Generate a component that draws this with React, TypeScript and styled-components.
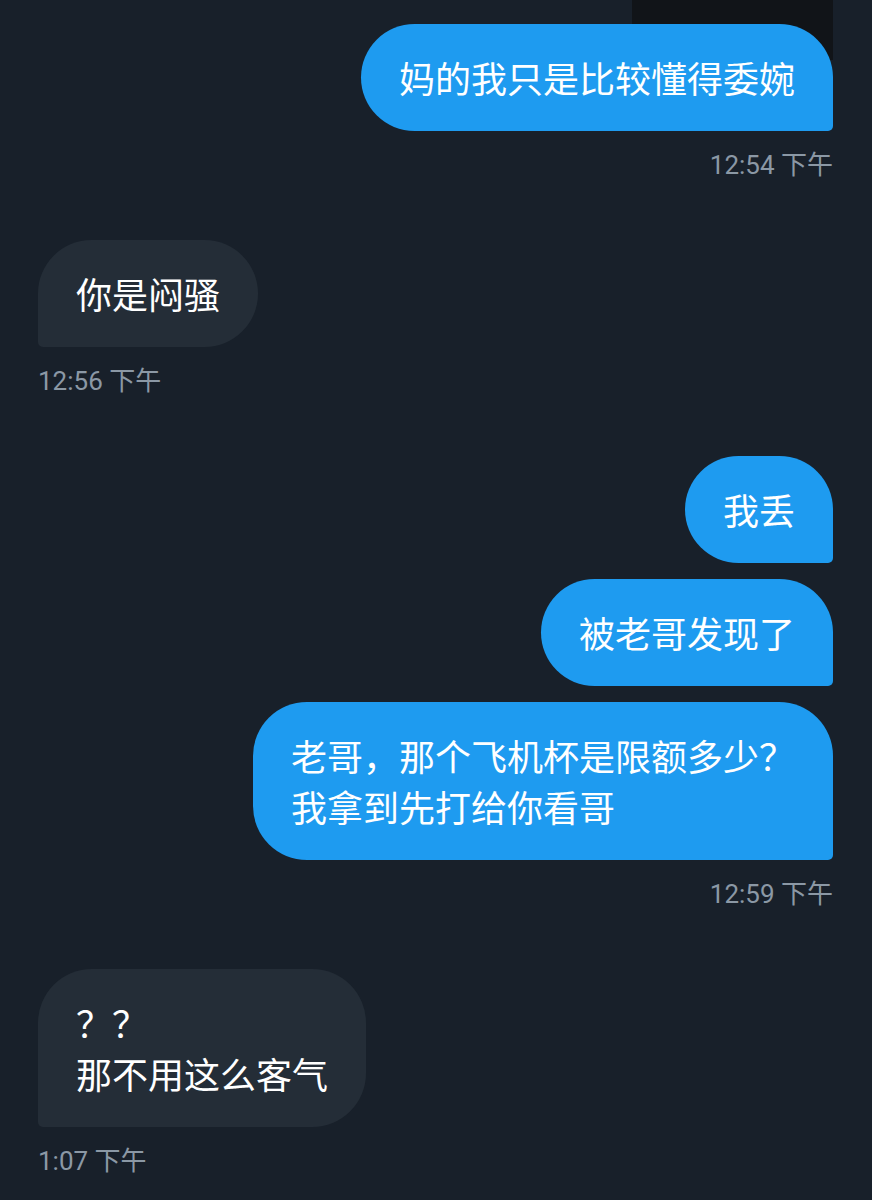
import styled, { createGlobalStyle, css } from "styled-components";

const GlobalStyle = createGlobalStyle`
  html, body {
    margin: 0;
    padding: 0;
    background-color: #18202a;
  }
  body {
    font-family: Roboto, "Noto Sans CJK SC", sans-serif;
  }
`;

const Thread = styled.div`
  min-height: 1200px;
  box-sizing: border-box;
  display: flex;
  flex-direction: column;
  padding: 0 39px 0 38px;
  background-color: #18202a;
`;

const Group = styled.div<{ $mine?: boolean }>`
  display: flex;
  flex-direction: column;
  align-items: ${(p) => (p.$mine ? "flex-end" : "flex-start")};
  gap: 16px;
  & + & {
    margin-top: 60px;
  }
`;

// bottom of an earlier media message, partly hidden by the first bubble
const MediaTail = styled.div`
  width: 201px;
  height: 60px;
  margin-bottom: -52px;
  background-color: #111418;
`;

const Bubble = styled.div<{ $mine?: boolean }>`
  position: relative;
  z-index: 1;
  box-sizing: border-box;
  padding: 28px 38px;
  font-family: "Noto Sans CJK SC", sans-serif;
  font-size: 36px;
  line-height: 51px;
  color: #ffffff;
  white-space: pre-line;
  ${(p) =>
    p.$mine
      ? css`
          background-color: #1e9bf0;
          border-radius: 54px 54px 5px 54px;
        `
      : css`
          background-color: #242d37;
          border-radius: 54px 54px 54px 5px;
        `}
`;

const Time = styled.div`
  margin-top: 3px;
  font-size: 26px;
  line-height: 30px;
  color: #8b98a5;
  font-family: Roboto, "Noto Sans CJK SC", sans-serif;
`;

type Msg = { mine: boolean; texts: string[]; time: string; media?: boolean };

const messages: Msg[] = [
  { mine: true, texts: ["妈的我只是比较懂得委婉"], time: "12:54 下午", media: true },
  { mine: false, texts: ["你是闷骚"], time: "12:56 下午" },
  {
    mine: true,
    texts: ["我丢", "被老哥发现了", "老哥，那个飞机杯是限额多少？\n我拿到先打给你看哥"],
    time: "12:59 下午",
  },
  { mine: false, texts: ["？？\n那不用这么客气"], time: "1:07 下午" },
];

const App = () => {
  return (
    <>
      <GlobalStyle />
      <Thread>
        {messages.map((m, i) => (
          <Group key={i} $mine={m.mine}>
            {m.media && <MediaTail />}
            {m.texts.map((t, j) => (
              <Bubble key={j} $mine={m.mine}>
                {t}
              </Bubble>
            ))}
            <Time>{m.time}</Time>
          </Group>
        ))}
      </Thread>
    </>
  );
};

export default App;
